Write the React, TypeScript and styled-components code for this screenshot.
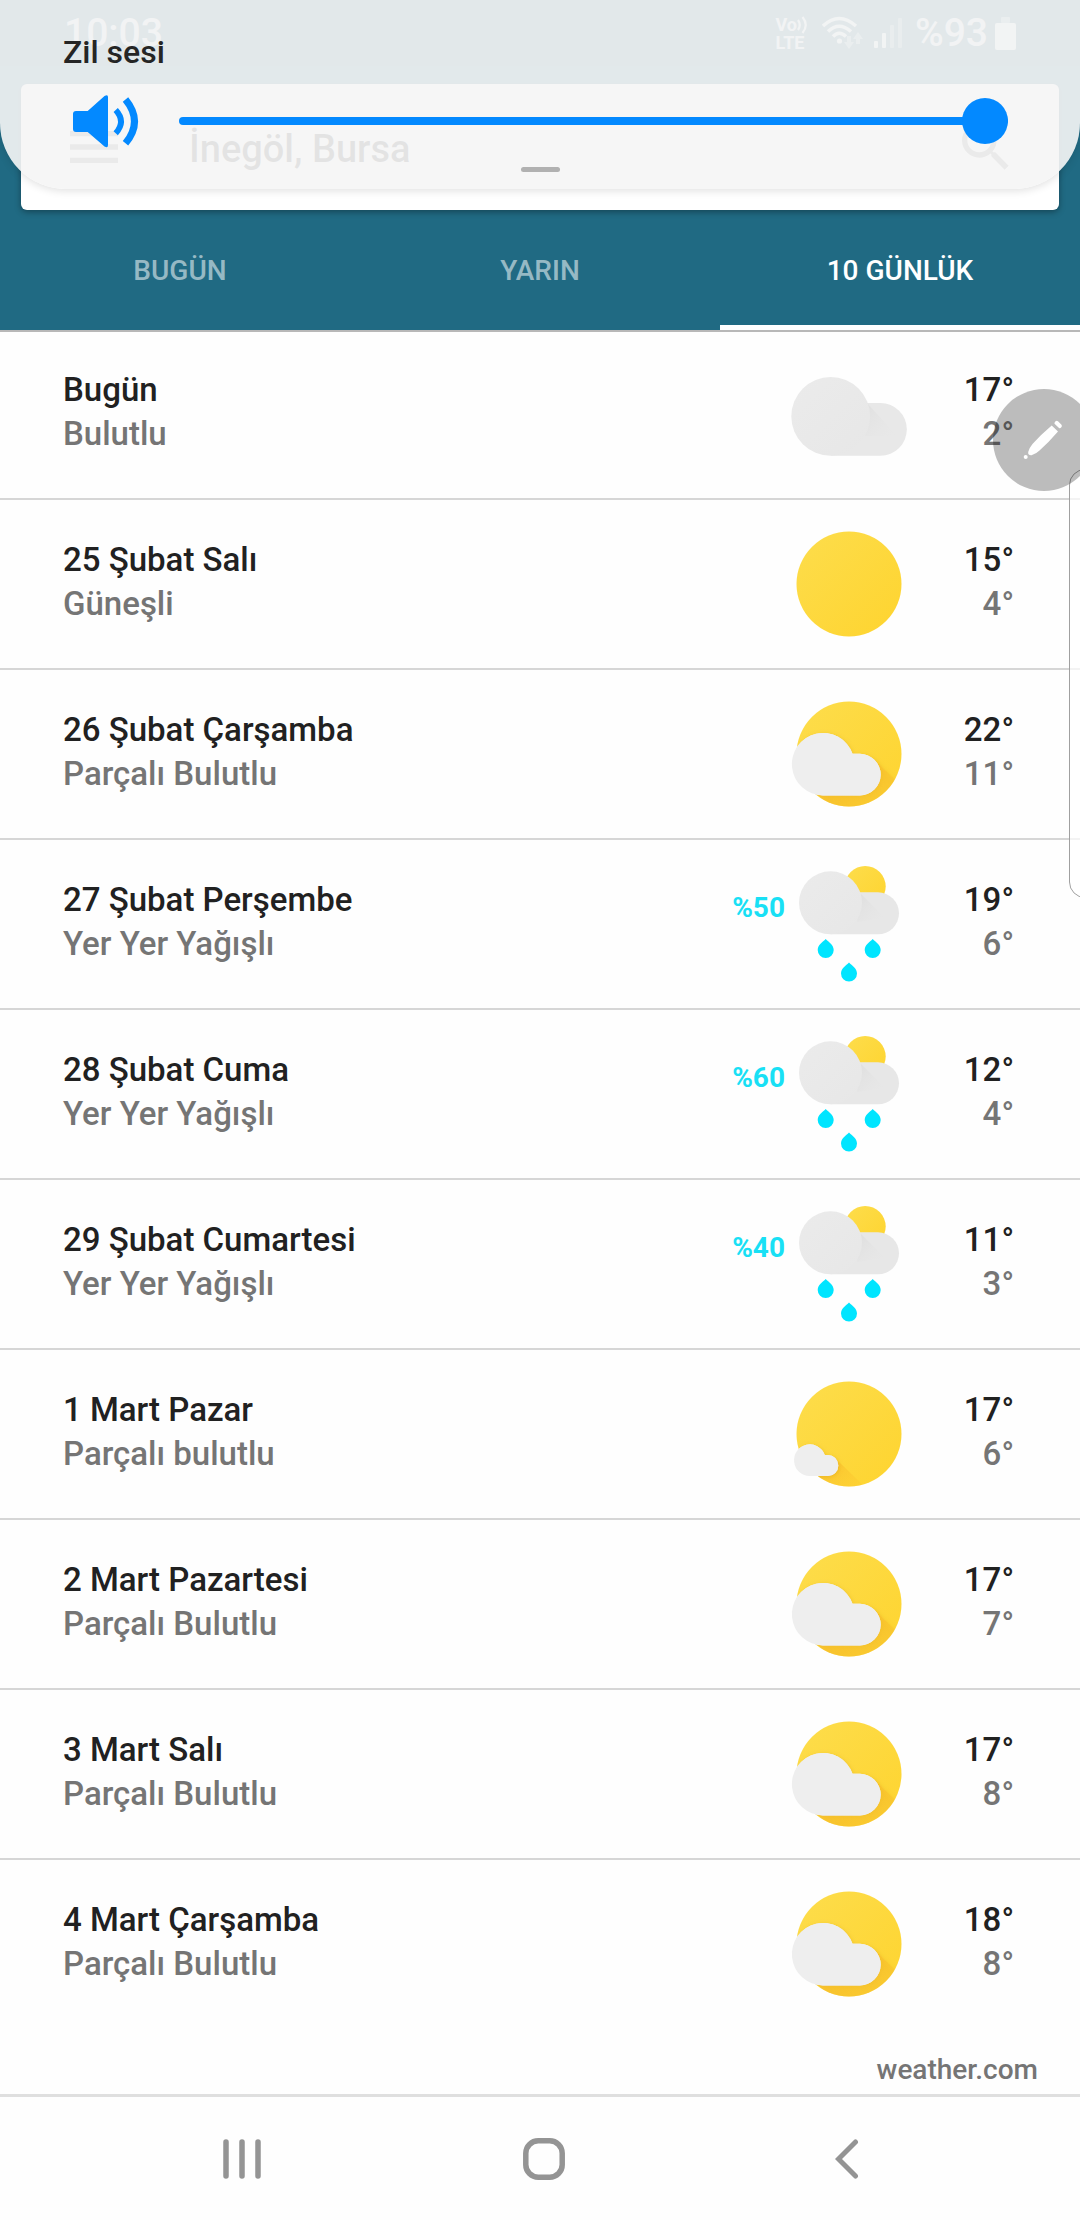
import React, { useState } from "react";
import styled, { createGlobalStyle } from "styled-components";
import { MdMenu, MdSearch } from "react-icons/md";

const color = {
  teal: "#206a83",
  accent: "#0389ff",
  text: "#212121",
  muted: "#757575",
  rain: "#18e0f5",
  line: "#d6d6d6",
  nav: "#949494",
};

const GlobalStyle = createGlobalStyle`
  *, *::before, *::after { box-sizing: border-box; }
  body {
    margin: 0;
    background: #fefefe;
    color: ${color.text};
    font-family: Roboto, "Noto Sans", sans-serif;
    font-weight: 500;
  }
  button { border: 0; padding: 0; background: none; font: inherit; color: inherit; cursor: pointer; }
  svg { display: block; flex: none; }
`;

const Screen = styled.div`
  position: relative;
  display: flex;
  flex-direction: column;
  min-height: 100vh;
  overflow: hidden;
`;

/* ---------- header ---------- */

const Header = styled.header`
  position: relative;
  background: ${color.teal};
  box-shadow: 0 2px 0 #b8b8b8;
`;

const StatusBar = styled.div`
  display: flex;
  align-items: center;
  justify-content: space-between;
  height: 66px;
  padding: 0 64px;
  background: #1d6078;
  color: rgba(255, 255, 255, 0.8);
  font-size: 39px;
  line-height: 66px;
`;

const StatusIcons = styled.div`
  display: flex;
  align-items: center;
  gap: 10px;
`;

const Battery = styled.span`
  display: flex;
  align-items: center;
  gap: 7px;
  margin-left: 3px;
`;

const Volte = styled.span`
  display: flex;
  flex-direction: column;
  margin-right: 4px;
  font-size: 18px;
  font-weight: 700;
  line-height: 17px;
`;

const VolteTop = styled.span`
  display: flex;
  align-items: center;
`;

const SearchCard = styled.form`
  display: flex;
  align-items: center;
  height: 126px;
  margin: 18px 21px 0;
  padding: 0 41px;
  border-radius: 6px;
  background: #fff;
  box-shadow: 0 2px 6px rgba(0, 0, 0, 0.35);
`;

const IconButton = styled.button`
  display: flex;
  font-size: 64px;
  color: ${color.muted};
`;

const PlaceInput = styled.input`
  flex: 1;
  min-width: 0;
  margin: 0 63px;
  padding: 4px 0 0;
  border: 0;
  outline: 0;
  background: none;
  color: #2c2c2c;
  font: inherit;
  font-size: 38px;
  font-weight: 500;
`;

const Tabs = styled.nav`
  display: grid;
  grid-template-columns: repeat(3, 1fr);
`;

const Tab = styled.button<{ $active: boolean }>`
  height: 120px;
  padding-top: 7px;
  border-bottom: 5px solid ${(p) => (p.$active ? "#fff" : "transparent")};
  color: ${(p) => (p.$active ? "#fff" : "rgba(255, 255, 255, 0.54)")};
  font-size: 28px;
  line-height: 32px;
`;

/* ---------- forecast ---------- */

const DayList = styled.ul`
  margin: 0;
  padding: 0;
  list-style: none;
`;

const DayRow = styled.li`
  display: flex;
  align-items: flex-start;
  height: 170px;
  padding: 38px 66px 0 63px;
  border-bottom: 2px solid ${color.line};
  font-size: 33px;
  line-height: 44px;

  &:last-child {
    height: 168px;
    border-bottom: 0;
  }
`;

const DayText = styled.div`
  flex: 1;
`;

const Strong = styled.div`
  color: ${color.text};
`;

const Soft = styled.div`
  color: ${color.muted};
`;

const Chance = styled.span`
  color: ${color.rain};
  font-size: 28px;
  font-weight: 700;
  line-height: 60px;
`;

const WeatherSvg = styled.svg`
  width: 128px;
  height: 128px;
  margin-top: -18px;
`;

const Temps = styled.div`
  width: 101px;
  text-align: right;
`;

const Source = styled.footer`
  padding: 18px 42px 0;
  text-align: right;
  font-size: 28px;
  line-height: 48px;
`;

const SourceLink = styled.a`
  color: ${color.muted};
  text-decoration: none;
`;

/* ---------- system navigation ---------- */

const NavBar = styled.nav`
  display: grid;
  grid-template-columns: repeat(3, 1fr);
  height: 126px;
  margin-top: auto;
  padding: 0 82px 0 91px;
  border-top: 3px solid #dfdfdf;
`;

const NavButton = styled.button`
  display: flex;
  align-items: center;
  justify-content: center;
`;

/* ---------- overlays ---------- */

const VolumePanel = styled.section`
  position: absolute;
  top: 0;
  left: 0;
  right: 0;
  z-index: 3;
  display: flex;
  flex-direction: column;
  padding: 32px 72px 17px;
  border-radius: 0 0 66px 66px;
  background: rgba(245, 245, 245, 0.915);
  box-shadow: 0 2px 8px rgba(0, 0, 0, 0.12);
`;

const VolumeLabel = styled.label`
  margin: 0 -9px 19px;
  color: #252525;
  font-size: 32px;
  line-height: 40px;
`;

const VolumeRow = styled.div`
  display: flex;
  align-items: center;
  gap: 39px;
  height: 60px;
  margin-bottom: 16px;
`;

const VolumeSlider = styled.input`
  appearance: none;
  flex: 1;
  min-width: 0;
  height: 46px;
  margin: 0;
  background: none;

  &::-webkit-slider-runnable-track {
    height: 8px;
    border-radius: 4px;
    background: ${color.accent};
  }
  &::-webkit-slider-thumb {
    appearance: none;
    width: 46px;
    height: 46px;
    margin-top: -19px;
    border-radius: 50%;
    background: ${color.accent};
  }
`;

const Grip = styled.span`
  align-self: center;
  width: 39px;
  height: 5px;
  border-radius: 3px;
  background: #b1b1b1;
`;

const EdgeHandle = styled.div`
  position: absolute;
  top: 469px;
  right: -30px;
  z-index: 1;
  width: 41px;
  height: 429px;
  border: 1px solid #a0a0a0;
  border-radius: 16px;
  background: rgba(255, 255, 255, 0.7);
`;

const PenButton = styled.button`
  position: absolute;
  top: 389px;
  right: -15px;
  z-index: 2;
  width: 102px;
  height: 102px;
  border-radius: 50%;
  background: rgba(0, 0, 0, 0.26);
`;

/* ---------- weather drawings ---------- */

type Kind = "cloudy" | "sunny" | "partly" | "mostlySunny" | "showers";

const DefsSvg = styled.svg`
  position: absolute;
`;

const Defs = () => (
  <DefsSvg width="0" height="0" aria-hidden="true">
    <defs>
      <linearGradient id="sun" x1="0" y1="0" x2="1" y2="1">
        <stop offset="0" stopColor="#fddd4c" />
        <stop offset="1" stopColor="#fed42f" />
      </linearGradient>
      <linearGradient id="gray" x1="0" y1="0" x2="1" y2="1">
        <stop offset="0" stopColor="#ebebeb" />
        <stop offset="1" stopColor="#e7e7e7" />
      </linearGradient>
      <linearGradient id="fold" x1="0" y1="0" x2="1" y2="1">
        <stop offset="0" stopColor="#c8c8c8" />
        <stop offset="1" stopColor="#e6e6e6" stopOpacity="0" />
      </linearGradient>
      <linearGradient id="cast" x1="0" y1="0" x2="1" y2="1">
        <stop offset="0.3" stopColor="#f8b828" />
        <stop offset="1" stopColor="#fdcb30" stopOpacity="0.4" />
      </linearGradient>
      <filter id="soft" x="-20%" y="-20%" width="140%" height="140%">
        <feDropShadow dx="1" dy="1" stdDeviation="2" floodColor="#c98a00" floodOpacity="0.3" />
      </filter>
      <clipPath id="disc">
        <circle cx="64" cy="64" r="52.5" />
      </clipPath>
    </defs>
  </DefsSvg>
);

const Drop = ({ x, y }: { x: number; y: number }) => (
  <path
    d={`M${x} ${y} C${x + 3} ${y + 3} ${x + 8} ${y + 6} ${x + 8} ${y + 11} A8 8 0 0 1 ${x - 8} ${y + 11} C${x - 8} ${y + 6} ${x - 3} ${y + 3} ${x} ${y} Z`}
    fill="#00e5ff"
  />
);

const Sun = () => <circle cx="64" cy="64" r="52.5" fill="url(#sun)" />;

const WeatherIcon = ({ kind }: { kind: Kind }) => (
  <WeatherSvg viewBox="0 0 128 128" aria-hidden="true">
    {kind === "cloudy" && (
      <>
        <path d="M45.700 105.700 H95.500 A26.300 26.300 0 0 0 95.500 53 H80 Z" fill="#e8e8e8" />
        <path d="M82 53 L112 86 L78 86 Z" fill="url(#fold)" opacity="0.3" />
        <circle cx="45.700" cy="66.300" r="39.400" fill="url(#gray)" />
      </>
    )}
    {kind === "sunny" && <Sun />}
    {kind === "partly" && (
      <>
        <Sun />
        <g clipPath="url(#disc)">
          <g filter="url(#soft)">
            <path d="M90 70 L118 98 L118 128 L52 128 L34 105 H75 Z" fill="url(#cast)" opacity="0.6" />
            <path
              d="M37.900 105.400 A31.200 31.200 0 1 1 67.500 63.800 H74.900 A20.800 20.800 0 0 1 74.900 105.400 Z"
              fill="#eee"
            />
          </g>
        </g>
        <path
          d="M37.900 105.400 A31.200 31.200 0 1 1 67.500 63.800 H74.900 A20.800 20.800 0 0 1 74.900 105.400 Z"
          fill="#eee"
        />
      </>
    )}
    {kind === "mostlySunny" && (
      <>
        <Sun />
        <g clipPath="url(#disc)">
          <path d="M50 88 L78 115 L60 128 L30 106 H43 Z" fill="url(#cast)" opacity="0.5" />
          <path
            filter="url(#soft)"
            d="M24.800 106 A15.800 15.800 0 1 1 39.800 85 H42.800 A10.500 10.500 0 0 1 42.800 106 Z"
            fill="#eee"
          />
        </g>
        <path
          d="M24.800 106 A15.800 15.800 0 1 1 39.800 85 H42.800 A10.500 10.500 0 0 1 42.800 106 Z"
          fill="#eee"
        />
      </>
    )}
    {kind === "showers" && (
      <>
        <circle cx="80.200" cy="26.500" r="20.500" fill="url(#sun)" />
        <path d="M45.500 74.300 H93 A21 21 0 0 0 93 32.300 H72 Z" fill="#e7e7e7" />
        <path d="M76 34 L100 58 L72 62 Z" fill="url(#fold)" opacity="0.3" />
        <circle cx="45.500" cy="42.800" r="31.500" fill="url(#gray)" />
        <Drop x={40.7} y={79} />
        <Drop x={87.7} y={79} />
        <Drop x={64} y={102.5} />
      </>
    )}
  </WeatherSvg>
);

/* ---------- data ---------- */

type Day = { date: string; sky: string; kind: Kind; high: number; low: number; chance?: number };

const days: Day[] = [
  { date: "Bugün", sky: "Bulutlu", kind: "cloudy", high: 17, low: 2 },
  { date: "25 Şubat Salı", sky: "Güneşli", kind: "sunny", high: 15, low: 4 },
  { date: "26 Şubat Çarşamba", sky: "Parçalı Bulutlu", kind: "partly", high: 22, low: 11 },
  { date: "27 Şubat Perşembe", sky: "Yer Yer Yağışlı", kind: "showers", high: 19, low: 6, chance: 50 },
  { date: "28 Şubat Cuma", sky: "Yer Yer Yağışlı", kind: "showers", high: 12, low: 4, chance: 60 },
  { date: "29 Şubat Cumartesi", sky: "Yer Yer Yağışlı", kind: "showers", high: 11, low: 3, chance: 40 },
  { date: "1 Mart Pazar", sky: "Parçalı bulutlu", kind: "mostlySunny", high: 17, low: 6 },
  { date: "2 Mart Pazartesi", sky: "Parçalı Bulutlu", kind: "partly", high: 17, low: 7 },
  { date: "3 Mart Salı", sky: "Parçalı Bulutlu", kind: "partly", high: 17, low: 8 },
  { date: "4 Mart Çarşamba", sky: "Parçalı Bulutlu", kind: "partly", high: 18, low: 8 },
];

const tabs = ["BUGÜN", "YARIN", "10 GÜNLÜK"];

export default function App() {
  const [active, setActive] = useState(2);
  const [place, setPlace] = useState("İnegöl, Bursa");
  const [volume, setVolume] = useState(100);

  return (
    <Screen>
      <GlobalStyle />
      <Defs />
      <Header>
        <StatusBar>
          <span>10:03</span>
          <StatusIcons>
            <Volte>
              <VolteTop>
                Vo
                <svg width="11" height="18" viewBox="0 0 11 18" fill="none" stroke="currentColor" strokeWidth="2.200">
                  <path d="M1 4 Q4.500 9 1 14" />
                  <path d="M5.500 1 Q12 9 5.500 17" />
                </svg>
              </VolteTop>
              LTE
            </Volte>
            <svg width="42" height="34" viewBox="0 0 42 34" fill="none" stroke="currentColor" strokeWidth="3.500">
              <path d="M1 10 Q17 -5 34 10" />
              <path d="M6 15.500 Q17 5 29 15.500" />
              <path d="M11 20.500 Q17 14 24 20.500" />
              <circle cx="17.500" cy="25" r="2.600" fill="currentColor" stroke="none" />
              <g opacity="0.5" fill="currentColor" stroke="none">
                <path d="M25 20 h4 v6 h3 l-5 7 -5 -7 h3 Z" />
                <path d="M34 28 h4 v-5 h3 l-5 -7 -5 7 h3 Z" />
              </g>
            </svg>
            <svg width="28" height="32" viewBox="0 0 28 32" fill="currentColor">
              <rect x="0" y="24" width="4" height="7" rx="1" />
              <rect x="8" y="16" width="4" height="15" rx="1" />
              <rect x="16" y="8" width="4" height="23" rx="1" opacity="0.4" />
              <rect x="24" y="1" width="4" height="30" rx="1" opacity="0.4" />
            </svg>
            <Battery>
              %93
              <svg width="21" height="33" viewBox="0 0 21 33" fill="currentColor">
                <rect x="6" y="0" width="9" height="6" rx="1" opacity="0.5" />
                <rect x="0" y="6" width="21" height="27" rx="2" />
              </svg>
            </Battery>
          </StatusIcons>
        </StatusBar>
        <SearchCard onSubmit={(e) => e.preventDefault()}>
          <IconButton type="button" aria-label="Menü">
            <MdMenu />
          </IconButton>
          <PlaceInput aria-label="Konum" value={place} onChange={(e) => setPlace(e.target.value)} />
          <IconButton type="submit" aria-label="Ara">
            <MdSearch />
          </IconButton>
        </SearchCard>
        <Tabs>
          {tabs.map((name, i) => (
            <Tab key={name} type="button" $active={i === active} onClick={() => setActive(i)}>
              {name}
            </Tab>
          ))}
        </Tabs>
      </Header>

      <main>
        <DayList>
          {days.map((day) => (
            <DayRow key={day.date}>
              <DayText>
                <Strong>{day.date}</Strong>
                <Soft>{day.sky}</Soft>
              </DayText>
              {day.chance !== undefined && <Chance>%{day.chance}</Chance>}
              <WeatherIcon kind={day.kind} />
              <Temps>
                <Strong>{day.high}°</Strong>
                <Soft>{day.low}°</Soft>
              </Temps>
            </DayRow>
          ))}
        </DayList>
      </main>

      <Source>
        <SourceLink href="#weather">weather.com</SourceLink>
      </Source>

      <NavBar>
        <NavButton type="button" aria-label="Son uygulamalar">
          <svg width="38" height="42" viewBox="0 0 38 42" stroke={color.nav} strokeWidth="5.500" strokeLinecap="round">
            <path d="M3 4 V38 M19 4 V38 M35 4 V38" />
          </svg>
        </NavButton>
        <NavButton type="button" aria-label="Ana ekran">
          <svg width="42" height="42" viewBox="0 0 42 42" fill="none" stroke={color.nav} strokeWidth="5.500">
            <rect x="2.800" y="2.800" width="36.400" height="36.400" rx="12.500" />
          </svg>
        </NavButton>
        <NavButton type="button" aria-label="Geri">
          <svg width="24" height="40" viewBox="0 0 24 40" fill="none" stroke={color.nav} strokeWidth="5" strokeLinecap="round">
            <path d="M20.500 3 L3.500 20 L20.500 37" />
          </svg>
        </NavButton>
      </NavBar>

      <EdgeHandle />
      <PenButton type="button" aria-label="Kalem">
        <svg width="102" height="102" viewBox="0 0 102 102" fill="#fff">
          <circle cx="32.700" cy="68" r="2" />
          <path d="M35.200 63 Q36.500 58.500 39.500 55 Q48 45.500 58.700 36.500 L65 42.500 Q56 53 46.500 61.500 Q43 65 38.500 66.300 Q36.500 66.500 35.300 65 Z" />
          <path d="M61.500 34.800 Q61 33.800 62.500 32.300 Q63.700 31.300 65 32.300 L68.500 35.800 Q69.300 37 68.500 38 Q67.300 39.700 66.300 39.200 Z" />
        </svg>
      </PenButton>

      <VolumePanel>
        <VolumeLabel htmlFor="ring-volume">Zil sesi</VolumeLabel>
        <VolumeRow>
          <svg width="68" height="54" viewBox="0 0 68 54" aria-hidden="true">
            <path
              d="M4 17 H15.700 L32.500 2 Q36 0 36 3 V51 Q36 54.500 32.500 52.500 L15.700 38 H4 Q1 38 1 35 V20 Q1 17 4 17 Z"
              fill={color.accent}
            />
            <g fill="none" stroke={color.accent}>
              <path d="M43.700 16 Q54.300 27.500 43.700 39.300" strokeWidth="5.800" />
              <path d="M53.500 5.500 Q71.500 27.500 53.500 49.300" strokeWidth="7" />
            </g>
          </svg>
          <VolumeSlider
            id="ring-volume"
            type="range"
            min={0}
            max={100}
            value={volume}
            onChange={(e) => setVolume(Number(e.target.value))}
          />
        </VolumeRow>
        <Grip />
      </VolumePanel>
    </Screen>
  );
}
